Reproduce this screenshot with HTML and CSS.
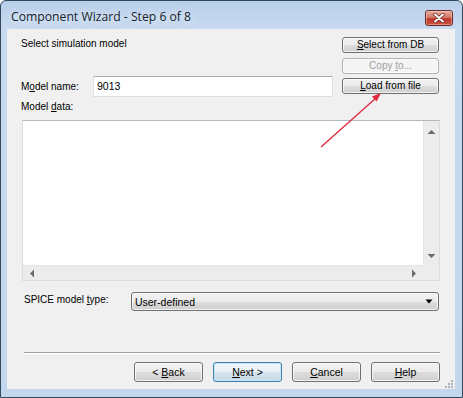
FILE: index.html
```html
<!DOCTYPE html>
<html>
<head>
<meta charset="utf-8">
<title>Component Wizard</title>
<link rel="stylesheet" href="styles.css">
</head>
<body>
<div class="window">
  <div class="titlebar">
    <span class="title">Component Wizard - Step 6 of 8</span>
    <div class="close">
      <svg width="12" height="10" viewBox="0 0 12 10">
        <path d="M2 1.5 L10 8.5 M10 1.5 L2 8.5" stroke="#6d2a25" stroke-width="3.4" stroke-linecap="round"/>
        <path d="M2 1.5 L10 8.5 M10 1.5 L2 8.5" stroke="#ffffff" stroke-width="1.9" stroke-linecap="round"/>
      </svg>
    </div>
  </div>
  <div class="client">
    <div class="top">
      <div class="top-left">
        <div class="heading">Select simulation model</div>
        <div class="name-row">
          <span class="label name-label">M<u>o</u>del name:</span>
          <div class="input">9013</div>
        </div>
      </div>
      <div class="side-buttons">
        <div class="btn"><span><u>S</u>elect from DB</span></div>
        <div class="btn disabled"><span>Copy <u>t</u>o...</span></div>
        <div class="btn"><span><u>L</u>oad from file</span></div>
      </div>
    </div>
    <div class="data-label">Model <u>d</u>ata:</div>
    <div class="textarea">
      <div class="ta-main">
        <div class="ta-content"></div>
        <div class="vscroll">
          <svg width="9" height="6" viewBox="0 0 9 6"><path d="M0.5 5 L4.5 1 L8.5 5 Z" fill="#6a6a6a"/></svg>
          <svg width="9" height="6" viewBox="0 0 9 6"><path d="M0.5 1 L4.5 5 L8.5 1 Z" fill="#6a6a6a"/></svg>
        </div>
      </div>
      <div class="hscroll-row">
        <div class="hscroll">
          <svg width="6" height="9" viewBox="0 0 6 9"><path d="M5 0.5 L1 4.5 L5 8.5 Z" fill="#6a6a6a"/></svg>
          <svg width="6" height="9" viewBox="0 0 6 9"><path d="M1 0.5 L5 4.5 L1 8.5 Z" fill="#6a6a6a"/></svg>
        </div>
        <div class="corner"></div>
      </div>
    </div>
    <div class="spice-row">
      <span class="label spice-label">SPICE model <u>t</u>ype:</span>
      <div class="combo">
        <span>User-defined</span>
        <svg width="8" height="5" viewBox="0 0 8 5"><path d="M0.5 0.5 L7.5 0.5 L4 4.5 Z" fill="#000"/></svg>
      </div>
    </div>
    <div class="separator"></div>
    <div class="footer">
      <div class="btn"><span>&lt; <u>B</u>ack</span></div>
      <div class="btn default"><span><u>N</u>ext &gt;</span></div>
      <div class="btn"><span><u>C</u>ancel</span></div>
      <div class="btn"><span><u>H</u>elp</span></div>
    </div>
    <svg class="grip" width="9" height="9" viewBox="0 0 9 9">
      <g fill="#a9b3c0">
        <rect x="7" y="1" width="2" height="2"/>
        <rect x="4" y="4" width="2" height="2"/><rect x="7" y="4" width="2" height="2"/>
        <rect x="1" y="7" width="2" height="2"/><rect x="4" y="7" width="2" height="2"/><rect x="7" y="7" width="2" height="2"/>
      </g>
    </svg>
  </div>
</div>
<svg class="annotation" width="463" height="398" viewBox="0 0 463 398">
  <line x1="321" y1="147" x2="376" y2="98" stroke="#e0283c" stroke-width="1.3"/>
  <polygon points="381,93 376.6,101.6 372,96.4" fill="#e0283c"/>
</svg>
</body>
</html>
```

FILE: styles.css
```css
* { box-sizing: border-box; }
html, body { margin: 0; padding: 0; }
body {
  position: relative;
  width: 463px;
  height: 398px;
  overflow: hidden;
  background: #ffffff;
  font-family: "Liberation Sans", Arial, sans-serif;
  font-size: 10px;
  color: #000;
}
u { text-decoration: underline; text-underline-offset: 1px; }

.window {
  width: 463px;
  height: 398px;
  border: 1px solid #34485c;
  border-radius: 6px 6px 0 0;
  background: linear-gradient(#b8cfea, #c8daf0 28px, #c2d6ee);
  padding: 0 7px 8px 6px;
  display: flex;
  flex-direction: column;
}

.titlebar {
  height: 28px;
  display: flex;
  align-items: flex-start;
  justify-content: space-between;
  padding-left: 4px;
  padding-right: 2px;
}
.title {
  margin-top: 7px;
  font-family: "Open Sans", "Liberation Sans", sans-serif;
  font-size: 12.2px;
  line-height: 18px;
  color: #141c2c;
  text-shadow: 0 0 6px rgba(255,255,255,0.9);
}
.close {
  margin-top: 9px;
  width: 28px;
  height: 16px;
  border: 1px solid #6b2a24;
  border-radius: 3px;
  background: linear-gradient(#e7a89c 0%, #d47a6a 45%, #c0392b 55%, #c8523f 100%);
  box-shadow: inset 0 0 0 1px rgba(255,255,255,0.35);
  display: flex;
  align-items: center;
  justify-content: center;
}

.client {
  position: relative;
  flex: 1;
  background: #f0f0f0;
  border: 1px solid #dfe7f1;
  border-width: 0;
  padding: 7px 16px 0 14px;
  display: flex;
  flex-direction: column;
}

.top {
  display: grid;
  grid-template-columns: 312px 97px;
  column-gap: 9px;
}
.heading {
  line-height: 15px;
  height: 15px;
}
.name-row {
  margin-top: 25px;
  display: flex;
  align-items: center;
}
.label { line-height: 12px; }
.name-label { width: 72px; }
.input {
  width: 240px;
  height: 21px;
  background: #fff;
  border: 1px solid #dbdfe6;
  border-top-color: #abadb3;
  padding-left: 3px;
  line-height: 19px;
  font-size: 10.5px;
}
.side-buttons {
  margin-top: 1px;
  display: flex;
  flex-direction: column;
  gap: 4.5px;
}

.btn {
  height: 16px;
  border: 1px solid #707070;
  border-radius: 3px;
  background: linear-gradient(#f2f2f2 0%, #ebebeb 50%, #dddddd 51%, #cfcfcf 100%);
  box-shadow: inset 0 0 0 1px rgba(255,255,255,0.7);
  display: flex;
  align-items: center;
  justify-content: center;
  line-height: 12px;
}
.btn.disabled {
  border-color: #adb2b5;
  background: #f4f4f4;
  color: #a0a0a0;
}

.data-label {
  margin-top: 4px;
  line-height: 12px;
}

.textarea {
  margin-top: 7px;
  margin-left: 1px;
  width: 418px;
  height: 161px;
  border: 1px solid #dadde3;
  border-top-color: #b5b8be;
  background: #fff;
  display: flex;
  flex-direction: column;
}
.ta-main {
  flex: 1;
  display: flex;
}
.ta-content { flex: 1; background: #fff; }
.vscroll {
  width: 16px;
  background: #ececec;
  border-left: 1px solid #e4e4e4;
  display: flex;
  flex-direction: column;
  align-items: center;
  justify-content: space-between;
  padding: 8px 0 6px;
}
.hscroll-row {
  height: 15px;
  display: flex;
}
.hscroll {
  flex: 1;
  background: #ececec;
  border-top: 1px solid #e4e4e4;
  display: flex;
  align-items: center;
  justify-content: space-between;
  padding: 0 6px;
}
.corner {
  width: 16px;
  background: #ececec;
}

.spice-row {
  margin-top: 11px;
  margin-left: 3px;
  display: flex;
  align-items: center;
  height: 19px;
}
.spice-label { width: 108px; margin-top: -4px; }
.combo {
  width: 311px;
  height: 19px;
  border: 1px solid #707070;
  border-radius: 3px;
  background: linear-gradient(#f2f2f2 0%, #ebebeb 50%, #dddddd 51%, #cfcfcf 100%);
  box-shadow: inset 0 0 0 1px rgba(255,255,255,0.7);
  display: flex;
  align-items: center;
  justify-content: space-between;
  padding: 0 5px 0 3px;
  font-size: 10.5px;
}

.separator {
  margin-top: 41px;
  margin-left: 3px;
  width: 416px;
  height: 2px;
  border-top: 1px solid #a0a0a0;
  border-bottom: 1px solid #ffffff;
}

.footer {
  margin-top: 8px;
  margin-right: -1px;
  display: flex;
  justify-content: flex-end;
  gap: 10px;
}
.footer .btn {
  width: 69px;
  height: 20px;
  font-size: 10.5px;
}
.footer .btn.default {
  border-color: #3c7fb1;
  box-shadow: inset 0 0 0 1px #c7e6f8;
  background: linear-gradient(#f0f6fa 0%, #e6eff5 50%, #d6e3ec 51%, #c9dae6 100%);
}

.grip {
  position: absolute;
  right: 2px;
  bottom: 1px;
}

.annotation {
  position: absolute;
  left: 0;
  top: 0;
  pointer-events: none;
}
```
